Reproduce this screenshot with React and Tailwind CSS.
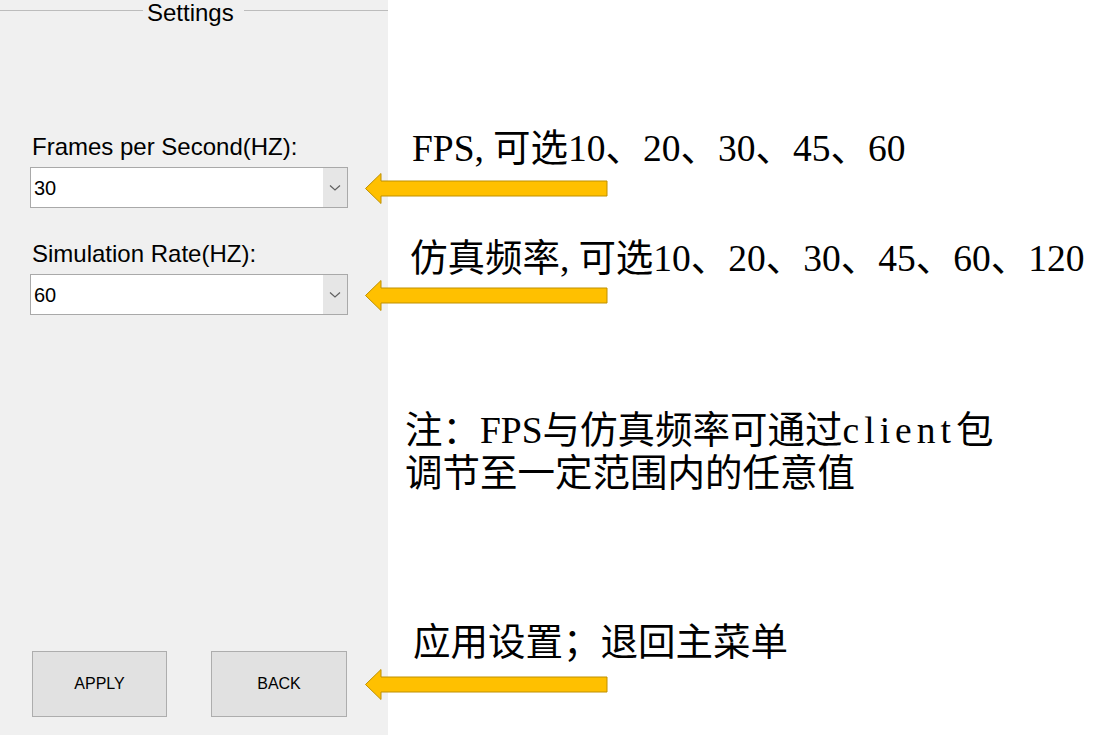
import React from 'react';

const uiFont = { fontFamily: '"Liberation Sans", Arial, sans-serif' };
const noteFont = { fontFamily: '"Liberation Serif", "Noto Sans CJK SC", serif' };

function Arrow({ top }) {
  return (
    <svg
      className="absolute left-[364px] pointer-events-none"
      style={{ top }}
      width="246"
      height="33"
      viewBox="0 0 246 33"
    >
      <path
        d="M1.5 16.5 L17 1.5 L17 9 L243 9 L243 24 L17 24 L17 31.5 Z"
        fill="#ffc000"
        stroke="#bf9000"
        strokeWidth="1"
      />
    </svg>
  );
}

function Combo({ value }) {
  return (
    <div className="flex h-[41px] w-[318px] items-stretch border border-[#a9a9a9] bg-white">
      <div className="flex flex-1 items-center pl-[3px] text-[20px] text-black">{value}</div>
      <div className="flex w-[24px] items-center justify-center bg-[#e6e6e6]">
        <svg width="12" height="8" viewBox="0 0 12 8">
          <path d="M1 1.5 L6 6 L11 1.5" fill="none" stroke="#606060" strokeWidth="1.2" />
        </svg>
      </div>
    </div>
  );
}

export default function App() {
  return (
    <div className="relative flex h-[735px] w-[1115px] overflow-hidden bg-white">
      {/* settings panel */}
      <div className="flex h-full w-[388px] flex-col bg-[#f0f0f0] pl-[30px]" style={uiFont}>
        <div className="-ml-[30px] flex h-[26px] items-start">
          <div className="mt-[10px] h-px w-[143px] bg-[#bcbcbc]" />
          <span className="px-[4px] text-[24px] leading-[26px] text-black">Settings</span>
          <div className="mt-[10px] ml-[6px] h-px flex-1 bg-[#bcbcbc]" />
        </div>

        <div className="mt-[107px] pl-[2px] text-[24px] leading-[28px] text-black">Frames per Second(HZ):</div>
        <div className="mt-[6px]">
          <Combo value="30" />
        </div>

        <div className="mt-[32px] pl-[2px] text-[24px] leading-[28px] text-black">Simulation Rate(HZ):</div>
        <div className="mt-[6px]">
          <Combo value="60" />
        </div>

        <div className="mt-auto mb-[18px] ml-[2px] flex gap-[44px]">
          <button className="h-[66px] w-[135px] border border-[#adadad] bg-[#e1e1e1] text-[16px] text-black">
            APPLY
          </button>
          <button className="h-[66px] w-[136px] border border-[#adadad] bg-[#e1e1e1] text-[16px] text-black">
            BACK
          </button>
        </div>
      </div>

      {/* notes */}
      <div className="flex flex-1 flex-col pt-[130px] text-[37.5px] text-black" style={noteFont}>
        <div className="ml-[24px] leading-[38px] whitespace-nowrap">
          FPS<span className="pr-[9px]">,</span>可选10、20、30、45、60
        </div>
        <div className="mt-[72px] ml-[22px] leading-[38px] whitespace-nowrap">
          仿真频率<span className="pr-[9px]">,</span>可选10、20、30、45、60、120
        </div>
        <div className="mt-[131px] ml-[17px] leading-[43px] whitespace-nowrap">
          <div>
            注：FPS与仿真频率可通过<span className="tracking-[5px]">client</span>包
          </div>
          <div>调节至一定范围内的任意值</div>
        </div>
        <div className="mt-[129px] ml-[25px] leading-[38px] whitespace-nowrap">应用设置；退回主菜单</div>
      </div>

      <Arrow top={172} />
      <Arrow top={279} />
      <Arrow top={668} />
    </div>
  );
}
